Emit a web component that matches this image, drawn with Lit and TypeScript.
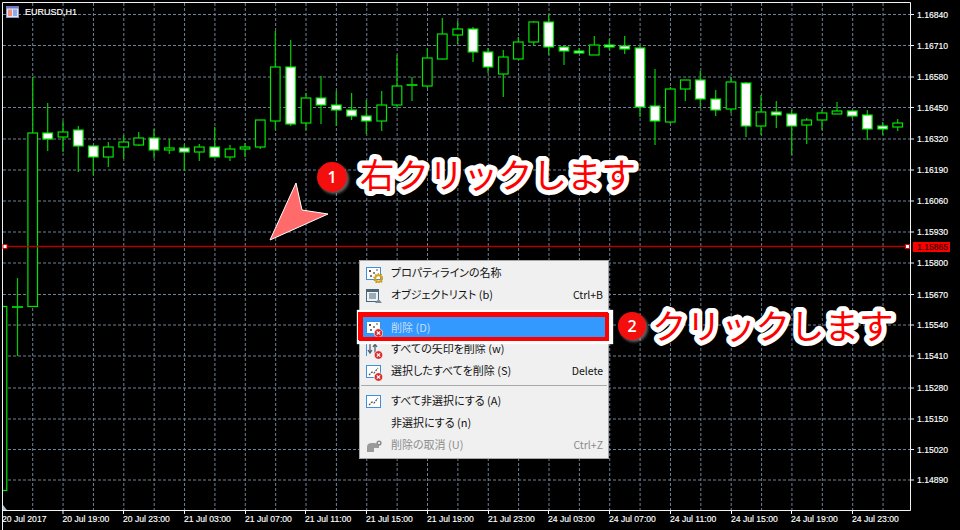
import { LitElement, html, css, svg } from "lit";
import { customElement } from "lit/decorators.js";

// [centre x, high, body top, body bottom, low, filled]
const CANDLES: [number, number, number, number, number, number][] = [
  [2, 306, 306.5, 490.5, 491, 0], [17.5, 278, 306.5, 307.5, 356, 2], [32.7, 77, 133, 306.5, 307, 0],
  [47.7, 103, 133, 139, 151, 1], [63, 121, 132, 137, 152, 0], [78.3, 126, 130, 146, 172, 1],
  [93.3, 146, 146, 157, 175, 1], [108.3, 142, 147, 157, 167, 0], [123.7, 135, 142, 147, 159, 0],
  [138.7, 132, 138, 145, 146, 0], [154, 129, 138, 150, 158, 1], [169.3, 139, 148, 150, 154, 0],
  [184.3, 144, 148, 152, 171, 1], [199.3, 144, 147, 152, 161, 0], [214.7, 127, 147, 157, 157, 1],
  [230, 145, 149, 157, 161, 0], [245, 143, 147, 149, 157, 0], [260.3, 120, 120, 147, 149, 0],
  [275.3, 31, 67, 121, 130, 0], [290.7, 40, 67, 124, 126, 1], [306, 93, 98, 123, 130, 0],
  [321, 76, 98, 105, 124, 1], [336.3, 91, 105, 110, 126, 1], [351.6, 93, 110, 116, 120, 1],
  [366.3, 100, 116, 121, 134, 1], [381.7, 91, 105, 121, 131, 0], [397, 55, 86, 105, 108, 0],
  [412, 77, 84.5, 85.5, 101, 2], [427.3, 48, 58, 86, 88, 0], [442.3, 18, 34, 59, 59.5, 0],
  [457.7, 21, 29, 35, 44, 0], [473, 27, 29, 52, 62, 1], [488, 48, 52, 67, 73, 1],
  [503.3, 50, 57, 74, 97, 0], [518.3, 37, 42, 59, 59, 0], [533.7, 21, 22, 42, 46, 0],
  [548.7, 14, 22, 47, 55, 1], [564, 46, 47, 51, 65, 1], [579, 48, 51, 53, 53, 1],
  [594.3, 36, 45, 55, 55, 0], [609.3, 39, 45, 47, 50, 1], [624.7, 36, 46, 49, 54, 1],
  [640, 46, 48, 107, 117, 1], [655, 69, 106, 121, 145, 1], [670.3, 87, 89, 122, 124, 0],
  [685.3, 80, 80, 89, 101, 0], [700.3, 71, 80, 99, 107, 1], [715.7, 90, 99, 110, 116, 1],
  [731, 77, 82, 109, 113, 0], [746, 82, 83, 126, 137, 1], [761, 95, 112, 126, 135, 0],
  [776.3, 101, 112, 115, 128, 1], [791.7, 110, 114, 126, 155, 1], [806.7, 118, 120, 125, 144, 0],
  [822, 110, 113, 120, 130, 0], [837, 102, 111, 114, 114, 0], [852.3, 111, 111, 116, 118, 1],
  [867.3, 110, 115, 129, 140, 1], [882.7, 122, 126, 129, 135, 1], [897.7, 119, 123, 127, 131, 0],
];

const PRICES: [string, number][] = [
  ["1.16840", 14.5], ["1.16710", 45.5], ["1.16580", 77], ["1.16450", 107.5], ["1.16320", 139],
  ["1.16190", 170], ["1.16060", 201], ["1.15930", 232], ["1.15800", 263], ["1.15670", 294.5],
  ["1.15540", 325], ["1.15410", 356], ["1.15280", 388], ["1.15150", 419], ["1.15020", 449.5],
  ["1.14890", 480],
];

const TIMES: [string, number][] = [
  ["20 Jul 2017", 2], ["20 Jul 19:00", 62.5], ["20 Jul 23:00", 123], ["21 Jul 03:00", 184],
  ["21 Jul 07:00", 245], ["21 Jul 11:00", 305], ["21 Jul 15:00", 366], ["21 Jul 19:00", 427],
  ["21 Jul 23:00", 488], ["24 Jul 03:00", 548], ["24 Jul 07:00", 609], ["24 Jul 11:00", 670],
  ["24 Jul 15:00", 731], ["24 Jul 19:00", 791], ["24 Jul 23:00", 852],
];

const VGRID = Array.from({ length: 29 }, (_, i) => 32.7 + i * 30.37);

const xBadge = svg`<circle cx="12.500" cy="12" r="4.300" fill="#d92c2c" stroke="#fff" stroke-width=".7"/><path d="M10.800 10.300l3.400 3.400m0-3.400l-3.400 3.400" stroke="#fff" stroke-width="1.200"/>`;
const docDots = svg`<rect x=".5" y=".5" width="14" height="12" fill="#fff" stroke="#3f8fdc"/><rect x="3" y="3" width="2" height="2" fill="#555"/><rect x="7" y="5" width="2" height="2" fill="#888"/><rect x="4" y="8" width="2" height="2" fill="#777"/><rect x="10" y="2" width="2" height="2" fill="#aaa"/>`;
const wand = svg`<rect x=".5" y=".5" width="14" height="12" fill="#fff" stroke="#3f8fdc"/><path d="M3 10l3-3 2 1 4-5" fill="none" stroke="#555" stroke-width="1.200" stroke-dasharray="2 1"/>`;

const ICONS: Record<string, unknown> = {
  gear: svg`${docDots}<circle cx="12.500" cy="11.500" r="3.300" fill="none" stroke="#dca515" stroke-width="2"/><circle cx="12.500" cy="11.500" r="4.600" fill="none" stroke="#b98a10" stroke-width="1.200" stroke-dasharray="1.500 1.400"/>`,
  list: svg`<rect x=".5" y=".5" width="12" height="12" fill="#eef3f8" stroke="#4d6478"/><rect x="1" y="1" width="11" height="2" fill="#4d6478"/><path d="M3 5h7M3 7h7M3 9h7" stroke="#4d6478"/><path d="M9 14l3.500-4 3.500 4z" fill="#78899a"/>`,
  del: svg`${docDots}${xBadge}`,
  arrows: svg`<path d="M4 1v8M2 7l2 3 2-3M9 10V2M7 4l2-3 2 3" fill="none" stroke="#50606e" stroke-width="1.300"/><rect x="0" y="0" width="1" height="13" fill="#3f8fdc"/>${xBadge}`,
  wandx: svg`${wand}${xBadge}`,
  wand: svg`${wand}`,
  undo: svg`<path d="M1 13V8q0-4 5-4h3l4 2v3H8v4z" fill="#9a9a9a"/><circle cx="13" cy="4" r="2.600" fill="#8a8a8a"/><path d="M12 3l2 2m0-2l-2 2" stroke="#fff" stroke-width=".8"/>`,
};

type Row = { icon?: string; label: string; key?: string; cls?: string };
const ROWS_A: Row[] = [
  { icon: "gear", label: "プロパティラインの名称" },
  { icon: "list", label: "オブジェクトリスト (b)", key: "Ctrl+B" },
];
const ROWS_B: Row[] = [
  { icon: "del", label: "削除 (D)", cls: "hl" },
  { icon: "arrows", label: "すべての矢印を削除 (w)" },
  { icon: "wandx", label: "選択したすべてを削除 (S)", key: "Delete" },
];
const ROWS_C: Row[] = [
  { icon: "wand", label: "すべて非選択にする (A)" },
  { label: "非選択にする (n)" },
  { icon: "undo", label: "削除の取消 (U)", key: "Ctrl+Z", cls: "off" },
];

@customElement("app-root")
export class AppRoot extends LitElement {
  static styles = css`
    :host {
      display: block;
      position: relative;
      width: 960px;
      height: 530px;
      overflow: hidden;
      background: #000;
    }
    .chart { display: block; }
    .chart text {
      font-family: "Liberation Sans", Arial, sans-serif;
      font-size: 8.600px;
      fill: #fff;
      stroke: #fff;
      stroke-width: 0.15px;
    }
    .chart text.title { font-size: 9px; }
    .chart text.tag { fill: #3a0000; stroke: #3a0000; }
    .grid { stroke: #708195; stroke-width: 1; stroke-dasharray: 3 2; }
    .frame { stroke: #f2f2f2; stroke-width: 1; }
    .wick { stroke: #00d000; stroke-width: 1.200; }
    .menu {
      position: absolute;
      left: 359px;
      top: 260px;
      width: 250px;
      height: 199px;
      box-sizing: border-box;
      padding: 0;
      display: flex;
      flex-direction: column;
      background: #f0f0f0;
      border: 1px solid #a8a8a8;
      font-family: "Noto Sans CJK JP", "Noto Sans", sans-serif;
      font-size: 11px;
      font-feature-settings: "palt";
      color: #111;
    }
    .row {
      height: 22px;
      flex: none;
      display: flex;
      align-items: center;
      margin: 0 3px;
      padding: 0 2px 0 3px;
      position: relative;
    }
    .ico { width: 17px; height: 16px; flex: none; margin: 5px 8px 0 0; }
    .lbl { flex: 1; white-space: nowrap; }
    .key { font-size: 10.500px; }
    .row.off { color: #8c8c8c; }
    .gap { height: 12px; flex: none; }
    .sep { height: 1px; flex: none; margin: 4px 1px 3px; background: #a9a9a9; }
    .row.hl {
      height: 20px;
      background: #3399ff;
      color: #c9def5;
      box-shadow: 0 0 0 4px #f00, -1px -1px 0 4px #f00, 1px 0 1px 7px #fff;
      z-index: 1;
    }
    .row.hl .ico { margin-top: 3px; }
    .note {
      position: absolute;
      display: flex;
      align-items: center;
      white-space: nowrap;
    }
    .note.a { left: 317px; top: 149px; gap: 13px; }
    .note.b { left: 618px; top: 298px; gap: 6px; }
    .num {
      width: 30px;
      height: 30px;
      border-radius: 50%;
      background: #f40f0f;
      color: #fff;
      font-family: "Open Sans", sans-serif;
      font-size: 16px;
      font-weight: 600;
      display: flex;
      align-items: center;
      justify-content: center;
      margin-top: 4px;
      box-shadow: 2px 2px 3px rgba(200, 200, 200, 0.5);
    }
    .note.b .num { width: 28px; height: 28px; }
    .say { display: block; overflow: visible; }
    .say text {
      font-family: "Noto Sans CJK JP", sans-serif;
      font-size: 34.500px;
      font-weight: 400;
      fill: #f00;
      stroke: #fff;
      stroke-width: 10px;
      stroke-linejoin: round;
      paint-order: stroke fill;
    }
    .pointer { position: absolute; left: 266px; top: 180px; }
  `;

  private candle(c: (typeof CANDLES)[number]) {
    const [x, hi, top, bot, lo, kind] = c;
    const bx = x - 4.8;
    const fill = kind === 0 ? "#000" : "#fff";
    return svg`
      <line class="wick" x1=${x} x2=${x} y1=${hi} y2=${top}></line>
      <line class="wick" x1=${x} x2=${x} y1=${bot} y2=${lo}></line>
      ${kind === 2
        ? svg`<line x1=${x - 5.500} x2=${x + 5.500} y1=${top + 0.5} y2=${top + 0.5} stroke="#00f000" stroke-width="1.600"></line>`
        : svg`<rect x=${bx} y=${top} width="9.600" height=${bot - top} fill=${fill} stroke="#00e600" stroke-width="1.200"></rect>`}
    `;
  }

  private row(r: Row) {
    return html`<div class="row ${r.cls ?? ""}">
      <svg class="ico" viewBox="0 0 17 16">${r.icon ? ICONS[r.icon] : ""}</svg>
      <span class="lbl">${r.label}</span>
      ${r.key ? html`<span class="key">${r.key}</span>` : ""}
    </div>`;
  }

  render() {
    return html`
      <svg class="chart" width="960" height="530" viewBox="0 0 960 530">
        ${PRICES.map(([, y]) => svg`<line class="grid" x1="3" x2="910" y1=${y} y2=${y}></line>`)}
        ${VGRID.map((x) => svg`<line class="grid" x1=${x} x2=${x} y1="3" y2="510"></line>`)}
        <clipPath id="plot"><rect x="3" y="3" width="907" height="507"></rect></clipPath>
        <g clip-path="url(#plot)">${CANDLES.map((c) => this.candle(c))}</g>
        <path class="frame" fill="none" d="M2.500 530V2.500H910.500V510.500M2.500 510.500H910.500"></path>
        <path d="M3 510v-5l4 5z" fill="#a9bdd2"></path>
        ${PRICES.map(([p, y]) => svg`
          <line class="frame" x1="910" x2="914" y1=${y} y2=${y}></line>
          <text x="917" y=${y + 3}>${p}</text>`)}
        ${TIMES.map(([t, x]) => svg`
          <line class="frame" x1=${x + 0.5} x2=${x + 0.5} y1="510" y2="514"></line>
          <text x=${x} y="522">${t}</text>`)}
        <line x1="5" x2="907" y1="246.500" y2="246.500" stroke="#b00000" stroke-width="1.500"></line>
        <rect x="3" y="244.500" width="4" height="4" fill="#fff" stroke="#e00000"></rect>
        <rect x="905.500" y="244.500" width="4" height="4" fill="#fff" stroke="#e00000"></rect>
        <rect x="913" y="242" width="37" height="10" fill="#fa0000"></rect>
        <text class="tag" x="917" y="250">1.15865</text>
        <g>
          <rect x="6.500" y="6.500" width="12" height="11" fill="#dfe6f7" stroke="#8f98c8"></rect>
          <rect x="6" y="6" width="13" height="2.500" fill="#6f78c0"></rect>
          <rect x="8" y="9.500" width="4" height="6.500" fill="#ef8f7c"></rect>
          <rect x="13" y="9.500" width="4" height="6.500" fill="#8fa8e8"></rect>
        </g>
        <text class="title" x="25" y="15">EURUSD,H1</text>
      </svg>

      <svg class="pointer" width="66" height="64" viewBox="266 180 66 64">
        <path d="M270 240L296 183L302 210L328 214Z" fill="#ff6b6b" stroke="#fff" stroke-width="1" stroke-linejoin="round"></path>
      </svg>

      <div class="note a">
        <span class="num">1</span>
        <svg class="say" width="290" height="52"><text x="0" y="39">右クリックします</text></svg>
      </div>

      <div class="menu">
        ${ROWS_A.map((r) => this.row(r))}
        <div class="gap"></div>
        ${ROWS_B.map((r) => this.row(r))}
        <div class="sep"></div>
        ${ROWS_C.map((r) => this.row(r))}
      </div>

      <div class="note b">
        <span class="num">2</span>
        <svg class="say" width="250" height="52"><text x="0" y="40.500">クリックします</text></svg>
      </div>
    `;
  }
}
